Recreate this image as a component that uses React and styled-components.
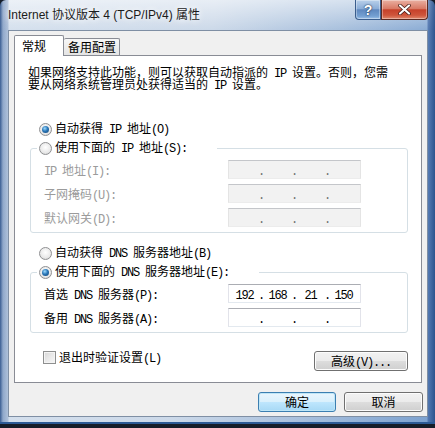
import React from 'react';
import styled, { createGlobalStyle } from 'styled-components';

const GlobalStyle = createGlobalStyle`
  html, body { margin: 0; padding: 0; background: #161d29; }
  body { width: 435px; height: 428px; overflow: hidden; }
  * { box-sizing: border-box; }
`;

const CJK = `"Noto Sans CJK SC", "Liberation Sans", sans-serif`;

// latin runs in the dialog font are fixed width, 6px each
const Lat = styled.span`
  font-family: "Liberation Mono", monospace;
  letter-spacing: -1.2px;
`;

function T({ children }) {
  return String(children)
    .split(/([\x20-\x7e]+)/)
    .filter(Boolean)
    .map((part, i) => (/[\x20-\x7e]/.test(part) ? <Lat key={i}>{part}</Lat> : part));
}

const Window = styled.div`
  width: 435px;
  height: 424px;
  display: flex;
  flex-direction: column;
  padding: 0 7px 0 8px;
  border-radius: 6px 6px 0 0;
  font-family: ${CJK};
  font-size: 12px;
  color: #000;
  background:
    linear-gradient(90deg, rgba(30, 70, 130, .85) 0, rgba(60, 100, 160, .45) 3px, rgba(60, 100, 160, .25) 8px, rgba(60, 100, 160, 0) 9px, rgba(60, 100, 160, 0) calc(100% - 8px), rgba(40, 80, 150, .5) calc(100% - 7px), rgba(30, 70, 130, .85) 100%),
    linear-gradient(180deg, rgba(255, 255, 255, .55) 0, rgba(255, 255, 255, 0) 30px),
    linear-gradient(96deg, #d6e1ee 0%, #ccd9e9 45%, #a8c0dd 72%, #7aa0cf 100%);
  box-shadow: inset 0 -2px 0 #2c5a95;
`;

const TitleBar = styled.div`
  height: 30px;
  display: flex;
  justify-content: space-between;
  align-items: flex-start;
`;

const TitleText = styled.div`
  font-family: "Liberation Sans", "Noto Sans CJK SC", sans-serif;
  font-size: 12px;
  line-height: 30px;
  color: #1b1b1b;
  text-shadow: 0 0 6px rgba(255, 255, 255, .95), 0 0 10px rgba(255, 255, 255, .8);
`;

const Caption = styled.div`
  display: flex;
`;

const CaptionButton = styled.div`
  width: ${p => p.$w}px;
  height: 20px;
  display: flex;
  align-items: center;
  justify-content: center;
  border: 1px solid ${p => (p.$close ? '#5b2a22' : '#3a5d8c')};
  border-top: 0;
  border-radius: ${p => (p.$close ? '0 0 4px 0' : '0 0 0 4px')};
  background: ${p =>
    p.$close
      ? 'linear-gradient(#eab0a2 0%, #d97a66 45%, #c6412a 52%, #cf553b 80%, #e08a6e 100%)'
      : 'linear-gradient(#b9d0ea 0%, #8caed8 45%, #5f88bf 52%, #74a0d2 85%, #9fc2e8 100%)'};
  box-shadow: inset 0 0 0 1px rgba(255, 255, 255, .35);
  color: #fff;
  font-family: "Liberation Sans", sans-serif;
  font-weight: bold;
  font-size: 14px;
  text-shadow: 0 0 2px #1d3557, 0 0 1px #1d3557;
`;

const Client = styled.div`
  height: 387px;
  display: flex;
  flex-direction: column;
  background: #f0f0f0;
  border: 1px solid #7f8fa4;
  padding: 4px 5px 4px 5px;
`;

const TabRow = styled.div`
  height: 21px;
  display: flex;
  align-items: flex-end;
`;

const Tab = styled.div`
  position: relative;
  z-index: ${p => (p.$active ? 2 : 1)};
  width: ${p => p.$w}px;
  height: ${p => (p.$active ? 21 : 17)}px;
  margin-bottom: ${p => (p.$active ? 0 : 1)}px;
  padding-left: ${p => (p.$active ? 7 : 4)}px;
  border: 1px solid #898c95;
  border-bottom: 0;
  border-left-width: ${p => (p.$active ? 1 : 0)}px;
  border-radius: 2px 2px 0 0;
  background: ${p => (p.$active ? '#fff' : 'linear-gradient(#f7f7f7, #e4e4e4)')};
  line-height: ${p => (p.$active ? 19 : 16)}px;
  font-size: 12px;
`;

const Panel = styled.div`
  margin-top: -1px;
  height: 328px;
  display: flex;
  flex-direction: column;
  background: #fff;
  border: 1px solid #898c95;
  padding: 10px 13px 11px 13px;
`;

const Description = styled.div`
  display: flex;
  flex-direction: column;
`;

const DescLine = styled.div`
  height: 11.5px;
  line-height: 11.5px;
  font-size: 12px;
  white-space: nowrap;
`;

const RadioRow = styled.label`
  display: flex;
  align-items: center;
  gap: 3px;
  height: 18px;
  margin: ${p => p.$top || 0}px 0 0 ${p => (p.$inset ? 11 : 0)}px;
  white-space: nowrap;
  line-height: 18px;
`;

const RadioCircle = styled.span`
  flex: none;
  width: 13px;
  height: 13px;
  border-radius: 50%;
  border: 1px solid #8f9092;
  background: radial-gradient(circle at 50% 40%, #ffffff 0, #e9e9e9 60%, #cdcdcd 100%);
  display: flex;
  align-items: center;
  justify-content: center;

  &::after {
    content: '';
    display: ${p => (p.$checked ? 'block' : 'none')};
    width: 7px;
    height: 7px;
    border-radius: 50%;
    background: radial-gradient(circle at 40% 35%, #9fdcff 0, #2a77b8 45%, #0f3f6e 100%);
  }
`;

const GroupBox = styled.fieldset`
  margin: 1px 0 0 2px;
  padding: 3px 13px 5px 13px;
  min-width: 0;
  border: 1px solid #d5dfe5;
  border-radius: 3px;
  box-shadow: inset 1px 1px 0 #fff, 1px 1px 0 #fff;

  legend {
    margin-left: -7px;
    padding: 0 30px 0 2px;
    height: 18px;
  }
`;

const Rows = styled.div`
  display: flex;
  flex-direction: column;
  gap: 5px;
`;

const FieldRow = styled.div`
  display: grid;
  grid-template-columns: 184px 133px;
  align-items: center;
  height: 19px;
`;

const FieldLabel = styled.span`
  height: 19px;
  line-height: 19px;
  color: ${p => (p.$disabled ? '#9b9b9b' : '#000')};
  white-space: nowrap;
`;

const IpBox = styled.div`
  width: 133px;
  height: 19px;
  display: flex;
  align-items: center;
  padding-left: 2px;
  border: 1px solid;
  border-color: ${p => (p.$disabled ? '#c4c6ca #e4e4e4 #ececec #e4e4e4' : '#abadb3 #e2e3ea #e3e9ef #e2e3ea')};
  background: ${p => (p.$disabled ? '#f2f2f2' : '#fff')};
  color: ${p => (p.$disabled ? '#6f6f6f' : '#000')};
`;

const IpSegment = styled.span`
  width: 27px;
  text-align: center;
`;

const IpDot = styled.span`
  width: 6px;
  text-align: center;
`;

const CheckRow = styled.div`
  display: flex;
  align-items: flex-start;
  justify-content: space-between;
  height: 20px;
  margin-top: 18px;
  padding-left: 15px;
`;

const CheckLabel = styled.label`
  display: flex;
  align-items: center;
  gap: 3px;
  height: 13px;
  line-height: 13px;
`;

const CheckBox = styled.span`
  width: 13px;
  height: 13px;
  border: 1px solid #8e8f8f;
  background: linear-gradient(135deg, #d6d6d6 0%, #e9e9e9 50%, #f7f7f7 100%);
  box-shadow: inset 0 0 0 1px #f4f4f4;
`;

const Button = styled.button`
  width: ${p => p.$w}px;
  height: 20px;
  padding: 0;
  font-family: ${CJK};
  font-size: 12px;
  line-height: 18px;
  color: #000;
  border: 1px solid ${p => (p.$default ? '#3c7fb1' : '#707070')};
  border-radius: 3px;
  background: ${p =>
    p.$default
      ? 'linear-gradient(#eaf6fd 0%, #d9f0fc 50%, #bee6fd 51%, #a7d9f5 100%)'
      : 'linear-gradient(#f2f2f2 0%, #ebebeb 50%, #dddddd 51%, #cfcfcf 100%)'};
  box-shadow: inset 0 0 0 1px ${p => (p.$default ? '#bfe6f7' : '#fcfcfc')};
`;

const Footer = styled.div`
  display: flex;
  justify-content: flex-end;
  gap: 8px;
  margin: 9px -1px 0 0;
`;

function Radio({ checked, children, top, inset }) {
  return (
    <RadioRow $top={top} $inset={inset}>
      <RadioCircle $checked={checked} />
      <span><T>{children}</T></span>
    </RadioRow>
  );
}

function IpField({ value, disabled }) {
  const parts = value || ['', '', '', ''];
  return (
    <IpBox $disabled={disabled}>
      {parts.map((p, i) => (
        <React.Fragment key={i}>
          {i > 0 && <IpDot><Lat>.</Lat></IpDot>}
          <IpSegment><Lat>{p}</Lat></IpSegment>
        </React.Fragment>
      ))}
    </IpBox>
  );
}

const ipRows = [
  { label: 'IP 地址(I):' },
  { label: '子网掩码(U):' },
  { label: '默认网关(D):' },
];

const dnsRows = [
  { label: '首选 DNS 服务器(P):', value: ['192', '168', '21', '150'] },
  { label: '备用 DNS 服务器(A):' },
];

export default function App() {
  return (
    <>
      <GlobalStyle />
      <Window>
        <TitleBar>
          <TitleText>Internet 协议版本 4 (TCP/IPv4) 属性</TitleText>
          <Caption>
            <CaptionButton $w={26}>?</CaptionButton>
            <CaptionButton $w={47} $close>
              <svg width="13" height="11" viewBox="0 0 13 11">
                <path d="M2 1.5 L11 9.5 M11 1.5 L2 9.5" stroke="#3b1510" strokeWidth="3.6" strokeLinecap="round" />
                <path d="M2 1.5 L11 9.5 M11 1.5 L2 9.5" stroke="#fff" strokeWidth="2.2" strokeLinecap="round" />
              </svg>
            </CaptionButton>
          </Caption>
        </TitleBar>

        <Client>
          <TabRow>
            <Tab $active $w={50}>常规</Tab>
            <Tab $w={56}>备用配置</Tab>
          </TabRow>

          <Panel>
            <Description>
              <DescLine><T>如果网络支持此功能，则可以获取自动指派的 IP 设置。否则，您需</T></DescLine>
              <DescLine><T>要从网络系统管理员处获得适当的 IP 设置。</T></DescLine>
            </Description>

            <Radio checked top={31} inset>自动获得 IP 地址(O)</Radio>
            <GroupBox>
              <legend><Radio>使用下面的 IP 地址(S):</Radio></legend>
              <Rows>
                {ipRows.map(r => (
                  <FieldRow key={r.label}>
                    <FieldLabel $disabled><T>{r.label}</T></FieldLabel>
                    <IpField disabled />
                  </FieldRow>
                ))}
              </Rows>
            </GroupBox>

            <Radio top={11} inset>自动获得 DNS 服务器地址(B)</Radio>
            <GroupBox>
              <legend><Radio checked>使用下面的 DNS 服务器地址(E):</Radio></legend>
              <Rows>
                {dnsRows.map(r => (
                  <FieldRow key={r.label}>
                    <FieldLabel><T>{r.label}</T></FieldLabel>
                    <IpField value={r.value} />
                  </FieldRow>
                ))}
              </Rows>
            </GroupBox>

            <CheckRow>
              <CheckLabel>
                <CheckBox />
                <span><T>退出时验证设置(L)</T></span>
              </CheckLabel>
              <Button $w={94}><T>高级(V)...</T></Button>
            </CheckRow>
          </Panel>

          <Footer>
            <Button $default $w={78}>确定</Button>
            <Button $w={79}>取消</Button>
          </Footer>
        </Client>
      </Window>
    </>
  );
}
